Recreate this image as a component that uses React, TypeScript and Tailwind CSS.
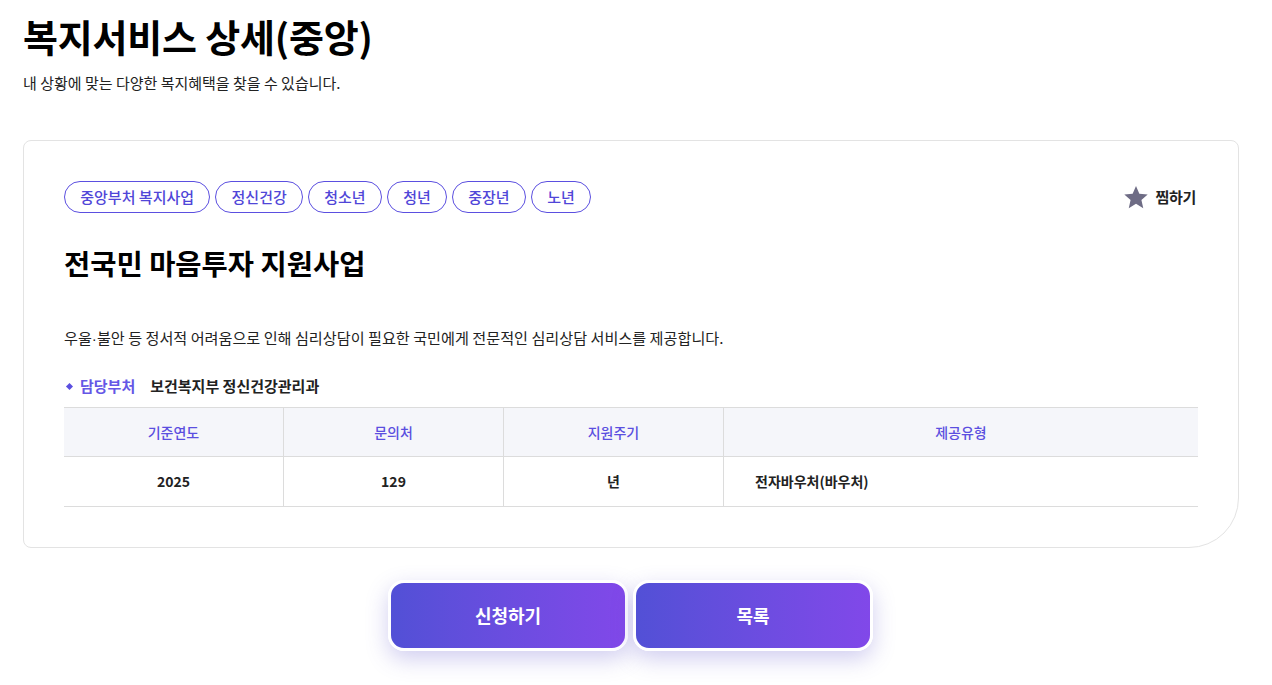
import React from "react";

const tags = ["중앙부처 복지사업", "정신건강", "청소년", "청년", "중장년", "노년"];

export default function App() {
  return (
    <div
      className="w-[1272px] h-[685px] bg-white text-[#111] overflow-hidden"
      style={{ fontFamily: '"Noto Sans CJK KR", "Noto Sans", sans-serif' }}
    >
      <div className="px-[23px] pt-[10px]">
        <h1 className="text-[38px] font-bold leading-[52px] tracking-[-0.2px] text-black">복지서비스 상세(중앙)</h1>
        <p className="mt-[10px] text-[15px] leading-[22px] text-[#222]">내 상황에 맞는 다양한 복지혜택을 찾을 수 있습니다.</p>

        <div className="mt-[46px] w-[1216px] h-[408px] border border-[#e3e3e3] rounded-[8px] rounded-br-[50px] px-[40px] pt-[40px]">
          <div className="flex items-center justify-between">
            <div className="flex gap-[5px]">
              {tags.map((t) => (
                <span
                  key={t}
                  className="h-[32px] px-[15.25px] flex items-center rounded-full border border-[#5b4fe0] text-[#5046d8] text-[15px] font-medium"
                >
                  {t}
                </span>
              ))}
            </div>
            <div className="flex items-center gap-[6px] pr-[2px]">
              <svg width="26" height="26" viewBox="0 0 24 24" fill="#6e6c85">
                <path d="M12 1.8l3.1 7.1 7.7.7-5.8 5.1 1.7 7.6L12 18.3l-6.7 4 1.7-7.6L1.2 9.6l7.7-.7z" />
              </svg>
              <span className="text-[15px] font-bold text-[#222] tracking-[-0.3px]">찜하기</span>
            </div>
          </div>

          <h2 className="mt-[30px] text-[28.5px] font-bold leading-[40px] text-black">전국민 마음투자 지원사업</h2>

          <p className="mt-[43px] text-[15.15px] leading-[22px] text-[#222]">
            우울<span style={{ fontFamily: '"Liberation Sans", sans-serif' }}>·</span>불안 등 정서적 어려움으로 인해 심리상담이 필요한 국민에게 전문적인 심리상담 서비스를 제공합니다.
          </p>

          <div className="mt-[25px] flex items-center text-[15px] font-semibold leading-[22px]">
            <span className="ml-[3px] w-[5px] h-[5px] bg-[#5b4fe0] rotate-45" />
            <span className="ml-[8px] text-[#6557e6]">담당부처</span>
            <span className="ml-[15px] text-[#222]">보건복지부 정신건강관리과</span>
          </div>

          <div className="mt-[10px] grid grid-cols-[220px_220px_220px_1fr] border-t border-[#dcdcdc] text-[14px]">
            <div className="h-[49px] bg-[#f5f6fa] border-b border-r border-[#dcdcdc] flex items-center justify-center text-[#5b4fe0] font-medium">기준연도</div>
            <div className="h-[49px] bg-[#f5f6fa] border-b border-r border-[#dcdcdc] flex items-center justify-center text-[#5b4fe0] font-medium">문의처</div>
            <div className="h-[49px] bg-[#f5f6fa] border-b border-r border-[#dcdcdc] flex items-center justify-center text-[#5b4fe0] font-medium">지원주기</div>
            <div className="h-[49px] bg-[#f5f6fa] border-b border-[#dcdcdc] flex items-center justify-center text-[#5b4fe0] font-medium">제공유형</div>
            <div className="h-[50px] border-b border-r border-[#dcdcdc] flex items-center justify-center font-semibold text-[#222]">2025</div>
            <div className="h-[50px] border-b border-r border-[#dcdcdc] flex items-center justify-center font-semibold text-[#222]">129</div>
            <div className="h-[50px] border-b border-r border-[#dcdcdc] flex items-center justify-center font-semibold text-[#222]">년</div>
            <div className="h-[50px] border-b border-[#dcdcdc] flex items-center pl-[31px] font-semibold text-[#222]">전자바우처(바우처)</div>
          </div>
        </div>

        <div className="mt-[32px] flex justify-center gap-[5px] pr-[11px]">
          {["신청하기", "목록"].map((b) => (
            <button
              key={b}
              className="w-[240px] h-[71px] rounded-[16px] border-[3px] border-white bg-gradient-to-r from-[#5250d6] to-[#8148e9] text-white text-[18px] font-bold shadow-[0_8px_22px_rgba(90,80,200,0.28)]"
            >
              {b}
            </button>
          ))}
        </div>
      </div>
    </div>
  );
}
